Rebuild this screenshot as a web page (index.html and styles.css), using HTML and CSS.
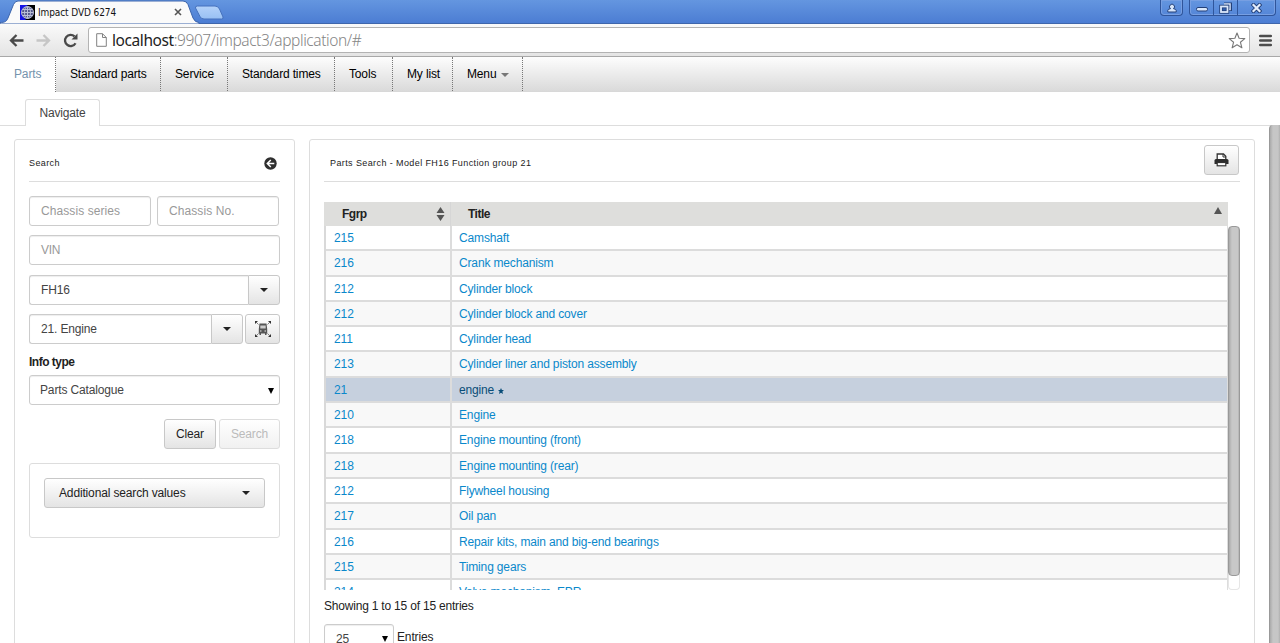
FILE: index.html
```
<!DOCTYPE html>
<html lang="en">
<head>
  <meta charset="UTF-8">
  <meta name="viewport" content="width=device-width, initial-scale=1.0">
  <title>Impact DVD 6274</title>
  <link rel="stylesheet" href="styles.css">
</head>
<body>
<!-- Browser window -->
<div class="titlebar">
  <svg class="tab-shape" width="228" height="24" viewBox="0 0 228 24">
    <defs>
      <linearGradient id="newtab" x1="0" y1="0" x2="0" y2="1">
        <stop offset="0" stop-color="#b4d2fa"/>
        <stop offset="1" stop-color="#98c0f3"/>
      </linearGradient>
    </defs>
    <path d="M0 24V22.500C5 22.500 6.500 21.500 8 18L13.500 4.500Q15 1 18 1H183Q186.500 1 188 4.500L193 18Q195 22.500 199 22.500V24Z" fill="#fafafa" stroke="#3c65ad" stroke-width="1"/>
    <path d="M197.500 6H215Q218 6 219.500 9L223 17Q223.500 19 221.500 19H204Q201 19 200 16.500L195.500 8Q195 6 197.500 6Z" fill="url(#newtab)" stroke="#4571bd" stroke-width="1"/>
  </svg>
  <div class="tab-label">
    <svg width="15" height="15" viewBox="0 0 15 15">
      <rect width="15" height="15" fill="#000"/>
      <path d="M0 0H8L3 4V11L6 15H0Z" fill="#1414e6"/>
      <circle cx="7.500" cy="7.500" r="6" fill="#55598c"/>
      <g fill="none" stroke="#b9bfd6" stroke-width="1">
        <circle cx="7.500" cy="7.500" r="6"/>
        <ellipse cx="7.500" cy="7.500" rx="3" ry="6"/>
        <path d="M7.500 1.500V13.500M1.500 7.500H13.500M2.500 4.500H12.500M2.500 10.500H12.500"/>
      </g>
    </svg>
    <span class="tab-title">Impact DVD 6274</span>
    <svg class="tab-close" width="8" height="8" viewBox="0 0 8 8"><path d="M1 1L7 7M7 1L1 7" stroke="#555" stroke-width="1.600"/></svg>
  </div>
  <div class="window-buttons">
    <span class="win user"><svg width="10" height="10" viewBox="0 0 10 10"><path d="M.8 9V7.500Q.8 6 3.500 5.700A2.500 2.500 0 1 1 6.500 5.700Q9.200 6 9.200 7.500V9Z" fill="#d8e6fa" stroke="#223f78" stroke-width="1"/></svg></span>
    <span class="win-group">
      <span class="win min"><svg width="12" height="5" viewBox="0 0 12 5"><rect x=".5" y=".5" width="11" height="3.500" rx="1.500" fill="#dbe8fb" stroke="#223f78"/></svg></span>
      <span class="win max"><svg width="13" height="12" viewBox="0 0 13 12"><g fill="none"><path d="M5 2H11.500V7.500H9" stroke="#223f78" stroke-width="3"/><path d="M5 2H11V7.500H9" stroke="#dbe8fb" stroke-width="1.500"/><rect x="2" y="4.500" width="6.500" height="5.500" fill="#315eae" stroke="#223f78" stroke-width="3.400"/><rect x="2" y="4.500" width="6.500" height="5.500" stroke="#dbe8fb" stroke-width="1.800"/></g></svg></span>
      <span class="win close"><svg width="11" height="10" viewBox="0 0 11 10"><path d="M2.500 2L8.500 8M8.500 2L2.500 8" stroke="#223f78" stroke-width="4" stroke-linecap="square"/><path d="M2.500 2L8.500 8M8.500 2L2.500 8" stroke="#e3edfc" stroke-width="2.200" stroke-linecap="square"/></svg></span>
    </span>
  </div>
</div>
<div class="toolbar">
  <svg class="nav-icon" width="15" height="13" viewBox="0 0 15 13"><path d="M14.500 6.500H2.500M7.500 1L2 6.500L7.500 12" fill="none" stroke="#4a4a4a" stroke-width="2.300"/></svg>
  <svg class="nav-icon" width="15" height="13" viewBox="0 0 15 13"><path d="M.5 6.500H12.500M7.500 1L13 6.500L7.500 12" fill="none" stroke="#c6c6c6" stroke-width="2.300"/></svg>
  <svg class="nav-icon" width="15" height="15" viewBox="0 0 15 15"><path d="M12.500 10.200A5.600 5.600 0 1 1 11.500 3.400" fill="none" stroke="#4a4a4a" stroke-width="2.300"/><path d="M14.500 .5V6.500H8.500Z" fill="#4a4a4a"/></svg>
  <div class="address">
    <svg width="11" height="14" viewBox="0 0 11 14"><path d="M.7 .7H6.500L10.300 4.500V13.300H.7ZM6.500 .7V4.500H10.300" fill="#fff" stroke="#828282"/></svg>
    <span class="url"><b>localhost</b>:9907/impact3/application/#</span>
    <svg class="star" width="18" height="17" viewBox="0 0 18 17"><path d="M9 1L11.100 6.300L16.800 6.600L12.400 10.200L13.900 15.800L9 12.700L4.100 15.800L5.600 10.200L1.200 6.600L6.900 6.300Z" fill="#fff" stroke="#777" stroke-width="1.100" stroke-linejoin="round"/></svg>
  </div>
  <svg class="hamburger" width="13" height="13" viewBox="0 0 13 13"><path d="M1.200 2H11.800M1.200 6.500H11.800M1.200 11H11.800" stroke="#4c4c4c" stroke-width="2.500" stroke-linecap="round"/></svg>
</div>

<!-- Application -->
<div class="main-nav">
  <a class="nav-item active">Parts</a>
  <a class="nav-item standard-parts">Standard parts</a>
  <a class="nav-item service">Service</a>
  <a class="nav-item times">Standard times</a>
  <a class="nav-item tools">Tools</a>
  <a class="nav-item list">My list</a>
  <a class="nav-item menu">Menu <i class="caret grey"></i></a>
</div>
<div class="sub-tabs"><a class="sub-tab">Navigate</a></div>

<div class="content">
  <div class="panel search-panel">
    <div class="panel-head">
      <span class="small-title">Search</span>
      <svg width="13" height="13" viewBox="0 0 13 13"><circle cx="6.500" cy="6.500" r="6.200" fill="#2f2f2f"/><path d="M10.300 6.500H4M6.800 3L3.300 6.500L6.800 10" fill="none" stroke="#fff" stroke-width="1.500"/></svg>
    </div>
    <div class="row chassis">
      <div class="field placeholder">Chassis series</div>
      <div class="field placeholder">Chassis No.</div>
    </div>
    <div class="row"><div class="field placeholder vin">VIN</div></div>
    <div class="row">
      <div class="field joined">FH16</div>
      <div class="btn drop"><i class="caret"></i></div>
    </div>
    <div class="row">
      <div class="field joined">21. Engine</div>
      <div class="btn drop"><i class="caret"></i></div>
      <div class="btn truck">
        <svg width="16" height="16" viewBox="0 0 16 16">
          <path d="M4.500 2.500H11.500L12.200 8V12.500H11.500V14H10V12.500H6V14H4.500V12.500H3.800V8Z" fill="#555"/>
          <path d="M5.300 4.500H10.700V7.500H5.300Z" fill="#ccc"/>
          <path d="M5 10H6.500M9.500 10H11" stroke="#eee"/>
          <path d="M0 0H3L0 3ZM16 0V3L13 0ZM0 16V13L3 16ZM16 16H13L16 13Z" fill="#333"/>
          <path d="M1 1L3.500 3.500M15 1L12.500 3.500M1 15L3.500 12.500M15 15L12.500 12.500" stroke="#666" stroke-width=".8"/>
        </svg>
      </div>
    </div>
    <div class="label">Info type</div>
    <div class="field select">Parts Catalogue <i class="arrow"></i></div>
    <div class="actions">
      <div class="btn clear">Clear</div>
      <div class="btn submit disabled">Search</div>
    </div>
    <div class="additional">
      <div class="btn">Additional search values <i class="caret"></i></div>
    </div>
  </div>

  <div class="panel result-panel">
    <div class="panel-head">
      <span class="small-title">Parts Search - Model FH16 Function group 21</span>
      <div class="btn print">
        <svg width="15" height="14" viewBox="0 0 15 14"><path d="M3.200 7V1H9.500L11.800 3.300V7" fill="#fff" stroke="#333" stroke-width="1.300"/><path d="M9 1V4H12" fill="none" stroke="#333"/><path d="M2 6H13Q14.500 6 14.500 7.500V11H.5V7.500Q.5 6 2 6Z" fill="#2d2d2d"/><rect x="3.200" y="9.500" width="8.600" height="3.300" fill="#fff" stroke="#333" stroke-width="1.200"/></svg>
      </div>
    </div>
    <div class="table-head">
      <div class="col-fgrp">Fgrp <svg width="9" height="14" viewBox="0 0 9 14"><path d="M4.500 0L8.500 6H.5ZM4.500 14L8.500 8H.5Z" fill="#555"/></svg></div>
      <div class="col-title">Title <svg width="8" height="7" viewBox="0 0 8 7"><path d="M4 0L8 7H0Z" fill="#555"/></svg></div>
    </div>
    <div class="table-scroll">
      <div class="table-body">
        <div class="tr"><a>215</a><a>Camshaft</a></div>
        <div class="tr"><a>216</a><a>Crank mechanism</a></div>
        <div class="tr"><a>212</a><a>Cylinder block</a></div>
        <div class="tr"><a>212</a><a>Cylinder block and cover</a></div>
        <div class="tr"><a>211</a><a>Cylinder head</a></div>
        <div class="tr"><a>213</a><a>Cylinder liner and piston assembly</a></div>
        <div class="tr selected"><a>21</a><a>engine <svg width="6" height="6" viewBox="0 0 6 6"><path d="M3 0L3.900 2H6L4.400 3.500L5 6L3 4.700L1 6L1.600 3.500L0 2H2.100Z"/></svg></a></div>
        <div class="tr"><a>210</a><a>Engine</a></div>
        <div class="tr"><a>218</a><a>Engine mounting (front)</a></div>
        <div class="tr"><a>218</a><a>Engine mounting (rear)</a></div>
        <div class="tr"><a>212</a><a>Flywheel housing</a></div>
        <div class="tr"><a>217</a><a>Oil pan</a></div>
        <div class="tr"><a>216</a><a>Repair kits, main and big-end bearings</a></div>
        <div class="tr"><a>215</a><a>Timing gears</a></div>
        <div class="tr"><a>214</a><a>Valve mechanism, EPR</a></div>
      </div>
      <div class="scroll-track"><div class="scroll-thumb"></div></div>
    </div>
    <div class="info">Showing 1 to 15 of 15 entries</div>
    <div class="length">
      <div class="field select">25 <i class="arrow"></i></div>
      <span>Entries</span>
    </div>
  </div>

  <div class="page-scroll"></div>
</div>
</body>
</html>
```
FILE: styles.css
```
* {
  box-sizing: border-box;
}
body {
  margin: 0;
  height: 643px;
  overflow: hidden;
  display: flex;
  flex-direction: column;
  background: #fff;
  color: #222;
  font-family: "Liberation Sans", Arial, sans-serif;
  font-size: 12px;
  letter-spacing: -0.15px;
  line-height: 16px;
}
svg {
  display: block;
  flex: none;
}

/* Browser window */
.titlebar {
  position: relative;
  flex: none;
  height: 24px;
  display: flex;
  justify-content: space-between;
  background: linear-gradient(#6496e0, #4c7dd3);
  border-bottom: 1px solid #3f66ab;
}
.tab-shape {
  position: absolute;
  left: 0;
  top: 0;
}
.tab-label {
  position: relative;
  display: flex;
  align-items: center;
  width: 183px;
  padding: 1px 0 0 20px;
}
.tab-title {
  flex: 1;
  margin-left: 3px;
  padding-top: 2px;
  color: #111;
  font-family: "DejaVu Sans Condensed", "DejaVu Sans", sans-serif;
  font-stretch: condensed;
  font-size: 10px;
  letter-spacing: -0.1px;
}
.tab-close {
  margin-right: 1px;
}
.window-buttons {
  display: flex;
  gap: 6px;
  height: 16px;
  margin-right: 4px;
}
.win {
  display: flex;
  align-items: center;
  justify-content: center;
  border-left: 1px solid #2f559b;
}
.win-group,
.win.user {
  border: 1px solid #2f559b;
  border-top: 0;
  border-radius: 0 0 4px 4px;
  box-shadow: inset 0 0 0 1px #779fe2;
}
.win.user {
  width: 23px;
}
.win-group {
  display: flex;
  width: 87px;
}
.win.min {
  width: 23px;
  border: 0;
  padding-top: 4px;
}
.win.max {
  width: 24px;
}
.win.close {
  flex: 1;
}
.toolbar {
  flex: none;
  display: flex;
  align-items: center;
  height: 33px;
  padding: 0 8px 0 9px;
  background: linear-gradient(#fafafa, #e4e4e4);
  border-bottom: 1px solid #a8a8a8;
}
.nav-icon {
  margin-right: 12px;
}
.address {
  flex: 1;
  display: flex;
  align-items: center;
  height: 26px;
  margin-left: -2px;
  padding: 0 3px 0 7px;
  background: #fff;
  border: 1px solid #b3b3b3;
  border-radius: 3px;
}
.url {
  flex: 1;
  margin-left: 5px;
  color: #858585;
  font-family: "Noto Sans", "Open Sans", sans-serif;
  font-size: 15.5px;
  font-weight: 300;
  letter-spacing: -0.42px;
  line-height: 20px;
}
.url b {
  font-weight: 400;
  color: #222;
}
.hamburger {
  margin-left: 9px;
}

/* Main navigation */
.main-nav {
  flex: none;
  display: flex;
  height: 35px;
  background: linear-gradient(#fdfdfd, #dadada);
  border-bottom: 1px solid #d8d8d8;
}
.nav-item {
  height: 34px;
  padding-left: 14px;
  line-height: 34px;
  border-right: 1px dotted #777;
  color: #000;
  white-space: nowrap;
}
.nav-item.active {
  width: 56px;
  height: 35px;
  background: #fff;
  color: #7593ad;
}
.standard-parts {
  width: 105px;
}
.service {
  width: 67px;
}
.times {
  width: 107px;
}
.tools {
  width: 58px;
}
.list {
  width: 60px;
}
.menu {
  width: 70px;
}
.caret {
  display: inline-block;
  border: 4px solid transparent;
  border-top-color: #222;
  border-bottom: 0;
}
.caret.grey {
  margin-left: 1px;
  border-top-color: #777;
  vertical-align: 1px;
}
.sub-tabs {
  flex: none;
  height: 34px;
  padding: 7px 0 0 25px;
  border-bottom: 1px solid #ddd;
}
.sub-tab {
  display: block;
  width: 75px;
  height: 27px;
  line-height: 27px;
  text-align: center;
  background: #fff;
  border: 1px solid #ddd;
  border-bottom: 0;
  border-radius: 3px 3px 0 0;
  color: #444;
}

/* Panels */
.content {
  flex: 1;
  min-height: 0;
  display: flex;
  padding-left: 14px;
}
.panel {
  height: 560px;
  margin-top: 13px;
  padding: 0 14px;
  border: 1px solid #ddd;
  border-radius: 3px;
}
.search-panel {
  flex: none;
  width: 281px;
}
.result-panel {
  flex: 1;
  margin-left: 14px;
  margin-right: 14px;
}
.panel-head {
  display: flex;
  align-items: center;
  justify-content: space-between;
  height: 42px;
  padding: 5px 3px 0 0;
  border-bottom: 1px solid #ddd;
}
.small-title {
  font-size: 9px;
  letter-spacing: 0.4px;
}
.page-scroll {
  width: 11px;
  margin-top: -1px;
  background: linear-gradient(90deg, #aaa, #c6c6c6 3px, #c6c6c6 8px, #b0b0b0);
  border-left: 1px solid #999;
  border-radius: 4px 0 0 0;
}

/* Form controls */
.row {
  display: flex;
  margin-bottom: 9.4px;
}
.panel-head + .row {
  margin-top: 14px;
}
.chassis {
  gap: 6px;
  padding-right: 1px;
}
.field {
  flex: 1;
  height: 30px;
  padding-left: 11px;
  line-height: 29px;
  background: #fff;
  border: 1px solid #ccc;
  border-radius: 3px;
  box-shadow: inset 0 1px 1px #eee;
  color: #444;
}
.placeholder {
  color: #999;
  letter-spacing: 0.08px;
}
.vin {
  letter-spacing: -0.3px;
}
.joined {
  border-right: 0;
  border-radius: 3px 0 0 3px;
}
.btn {
  display: flex;
  align-items: center;
  justify-content: center;
  height: 30px;
  background: linear-gradient(#fff, #e4e4e4);
  border: 1px solid #c8c8c8;
  border-radius: 3px;
  color: #222;
}
.drop {
  width: 32px;
  border-radius: 0 3px 3px 0;
}
.truck {
  width: 35px;
  margin-left: 2px;
}
.label {
  margin-bottom: 5.4px;
  font-weight: bold;
  font-size: 12px;
  letter-spacing: -0.5px;
}
.select {
  display: flex;
  align-items: center;
  justify-content: space-between;
  padding-right: 5px;
}
.search-panel .select {
  padding: 2px 5px 0 10px;
}
.arrow {
  border: 3px solid transparent;
  border-top: 6px solid #000;
  border-bottom: 0;
}
.actions {
  display: flex;
  justify-content: flex-end;
  gap: 3px;
  margin: 14px 0;
}
.clear {
  width: 52px;
}
.submit {
  width: 61px;
}
.disabled {
  color: #bbb;
  border-color: #ddd;
  background: linear-gradient(#fff, #f1f1f1);
}
.additional {
  height: 75px;
  padding: 14px;
  border: 1px solid #ddd;
  border-radius: 3px;
}
.additional .btn {
  justify-content: space-between;
  padding: 0 14px;
}
.print {
  width: 35px;
  margin: -6px -2px 0 0;
}

/* Results table */
.result-panel .panel-head {
  padding-left: 6px;
}
.table-head {
  display: flex;
  width: 904px;
  height: 24px;
  margin-top: 20px;
  background: #dededc;
  color: #222;
  font-size: 12px;
  font-weight: bold;
  letter-spacing: -0.5px;
  line-height: 25px;
}
.col-fgrp {
  display: flex;
  align-items: center;
  justify-content: space-between;
  width: 127px;
  padding: 0 5px 0 18px;
  border-right: 1px solid #d6d6d6;
}
.col-title {
  flex: 1;
  display: flex;
  justify-content: space-between;
  padding: 0 6px 0 17px;
}
.col-title svg {
  margin-top: 5px;
}
.table-scroll {
  display: flex;
  height: 364px;
  overflow: hidden;
}
.table-body {
  width: 904px;
  border-left: 2px solid #d9d9d9;
  border-right: 1px solid #ddd;
}
.tr {
  display: flex;
  height: 25.3px;
  line-height: 24px;
  border-bottom: 2px solid #dcdcdc;
  color: #0a88cb;
}
.tr:nth-child(even) {
  background: #f8f8f8;
}
.tr a:first-child {
  width: 126px;
  padding-left: 8px;
  border-right: 2px solid #dcdcdc;
  letter-spacing: -0.1px;
}
.tr a:last-child {
  padding-left: 7px;
}
.tr.selected {
  background: #c6d0de;
}
.tr.selected a:last-child {
  color: #094d78;
}
.tr svg {
  display: inline-block;
  margin-left: 1px;
  fill: #094d78;
}
.scroll-track {
  width: 12px;
  border: 1px solid #e6e6e6;
  border-top: 0;
  border-radius: 4px;
}
.scroll-thumb {
  height: 350px;
  margin: 0 -1px;
  background: linear-gradient(90deg, #aaa, #c8c8c8 3px, #c8c8c8 9px, #aaa);
  border: 1px solid #999;
  border-radius: 4px;
}
.info {
  margin: 8px 0 10px;
  letter-spacing: -0.2px;
}
.length {
  display: flex;
  gap: 3px;
  line-height: 26px;
}
.length .select {
  flex: none;
  width: 70px;
}
```
